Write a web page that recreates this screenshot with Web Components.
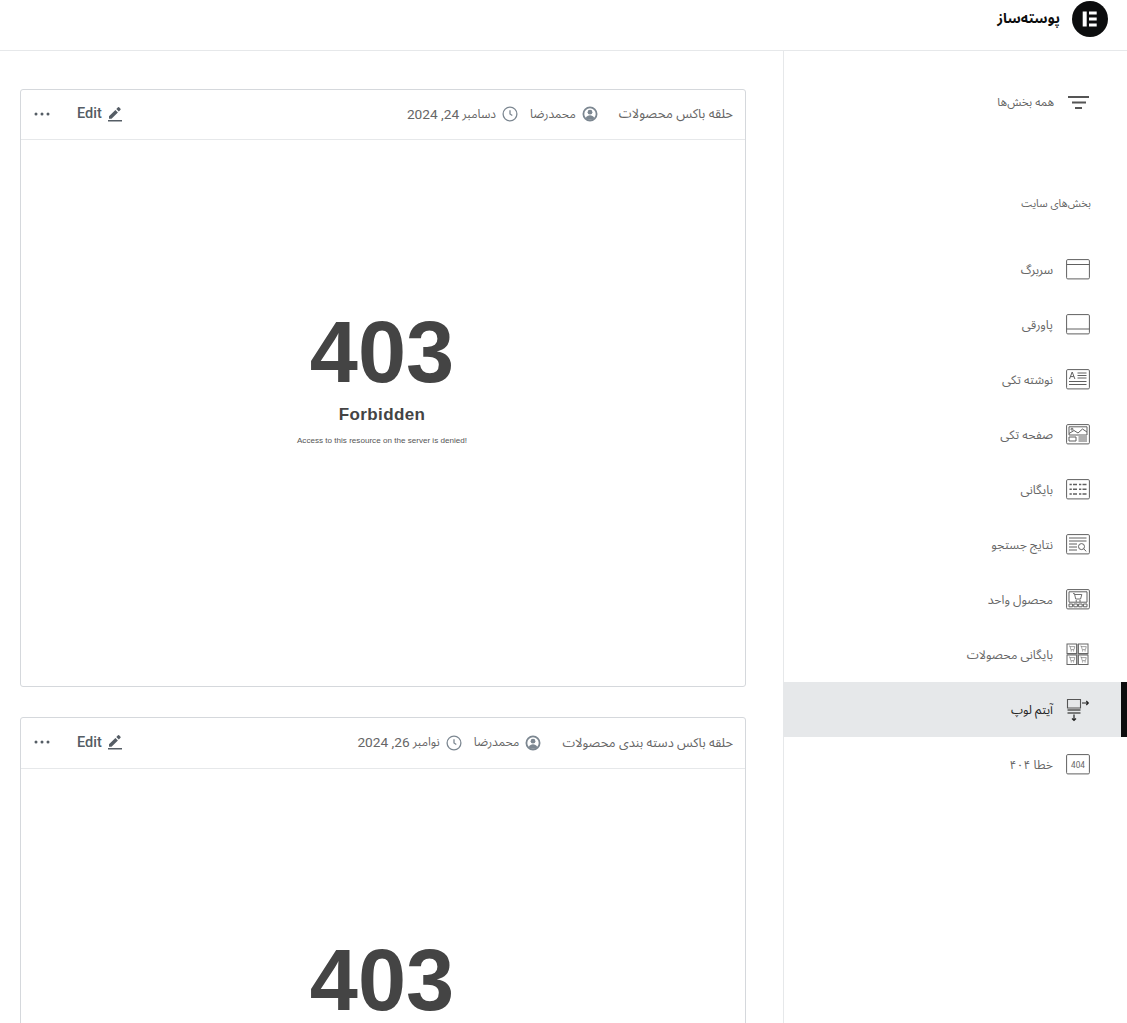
<!DOCTYPE html>
<html lang="fa">
<head>
<meta charset="utf-8">
<title>پوسته‌ساز</title>
<style>
html,body{margin:0;padding:0;height:100%;overflow:hidden;background:#fff}
body{font-family:Roboto,"DejaVu Sans",sans-serif;color:#555}
</style>
</head>
<body>
<app-shell>
  <site-topbar slot="top" title="پوسته‌ساز"></site-topbar>
  <div slot="main">
    <template-card title="حلقه باکس محصولات" author="محمدرضا" date="دسامبر" num="24, 2024"></template-card>
    <template-card tall title="حلقه باکس دسته بندی محصولات" author="محمدرضا" date="نوامبر" num="26, 2024"></template-card>
  </div>
  <side-nav slot="side">
    <nav-item kind="all" label="همه بخش‌ها"></nav-item>
    <nav-heading>بخش‌های سایت</nav-heading>
    <nav-item kind="header" label="سربرگ"></nav-item>
    <nav-item kind="footer" label="پاورقی"></nav-item>
    <nav-item kind="post" label="نوشته تکی"></nav-item>
    <nav-item kind="page" label="صفحه تکی"></nav-item>
    <nav-item kind="archive" label="بایگانی"></nav-item>
    <nav-item kind="search" label="نتایج جستجو"></nav-item>
    <nav-item kind="product" label="محصول واحد"></nav-item>
    <nav-item kind="products" label="بایگانی محصولات"></nav-item>
    <nav-item kind="loop" label="آیتم لوپ" active></nav-item>
    <nav-item kind="e404" label="خطا ۴۰۴"></nav-item>
  </side-nav>
</app-shell>
<script>
const FA='"Noto Sans Arabic","DejaVu Sans",Roboto,sans-serif';
function el(name,cls){customElements.define(name,cls)}
function box(extra){return `<rect x=".6" y=".6" width="22.8" height="19.3" rx="1.2"/>${extra||''}`}
function lines(arr){return arr.map(l=>`<path d="M${l[0]} ${l[1]}H${l[2]}"/>`).join('')}
function cart(x,y,s){return `<g transform="translate(${x} ${y}) scale(${s})"><path d="M0 0h1.600l1.400 6h5.400l1.400-5H2"/><circle cx="3.600" cy="8.200" r=".5"/><circle cx="7.800" cy="8.200" r=".5"/></g>`}
const cell=(y)=>`M3.500 ${y}h2.300M7 ${y}h4M13 ${y}h2.300M16.500 ${y}h4`;
const ICONS={
 header:box('<path d="M.6 5.500h22.800"/>'),
 footer:box('<path d="M.6 15h22.800"/>'),
 post:box(lines([[11.5,4,20.5],[11.5,6.5,20.5],[11.5,9,20.5],[3,12.5,20.5],[3,15.5,20.5]])+'<path d="M3.500 10 6.200 3l2.700 7M4.600 7.600h3.200"/>'),
 page:box('<path d="M3 2.800h18v8.200H3z"/><path d="M3 9.500l5-3 4 2.500 4.500-4L21 8"/><circle cx="6" cy="5.200" r="1"/><path d="M3 13h7v4H3zM12.500 13h8.500M12.500 15h8.500M12.500 17h8.500"/>'),
 archive:box(`<path stroke-width="1.400" d="${cell(5.5)}${cell(10.2)}${cell(15)}"/>`),
 search:box(lines([[3,4,20.5],[3,7,20.5],[3,10,11],[3,13,11],[3,16,11]])+'<circle cx="15.500" cy="12.600" r="3"/><path d="M17.700 14.800l2.600 2.600"/>'),
 product:box('<path d="M3 2.800h18v10.400H3z"/>'+cart(7,4.6,.9)+'<path d="M3 15h3.600v2.800H3zM7.800 15h3.600v2.800H7.800zM12.600 15h3.600v2.800h-3.600zM17.400 15H21v2.800h-3.600z"/>'),
 products:'<path d="M10.600 1h1.800v21h-1.800zM1 10.500h21v1.500H1z" fill="#b5b5b5" stroke="none"/><rect x="1" y="1" width="9.600" height="9.500"/><rect x="12.400" y="1" width="9.600" height="9.500"/><rect x="1" y="12" width="9.600" height="9.500"/><rect x="12.400" y="12" width="9.600" height="9.500"/>'+cart(3,3,.6)+cart(14.4,3,.6)+cart(3,14,.6)+cart(14.4,14,.6),
 loop:'<path d="M1.500 1.500h13v8.500h-13z" /><path d="M1.500 12h13M1.500 15h13" stroke-width="1.400"/><path d="M16 5h6M20.300 3l2 2-2 2M8 16.500V22.500M6 20.500l2 2 2-2" stroke="#222" stroke-width="1.200"/>',
 e404:box('<text x="12" y="13.600" text-anchor="middle" font-family="Roboto,sans-serif" font-size="8.200" fill="#666" stroke="none">404</text>')
};
const shellT=document.createElement('template');
shellT.innerHTML=`<style>
:host{display:grid;grid-template-columns:783px 1fr;grid-template-rows:51px 1fr;height:100vh;overflow:hidden}
.top{grid-column:1/-1;border-bottom:1px solid #e6e8ea}
.main{padding:38px 37px 0 20px;overflow:hidden;min-height:0}
.side{border-left:1px solid #e6e8ea;min-height:0;overflow:hidden}
</style><div class="top"><slot name="top"></slot></div><div class="main"><slot name="main"></slot></div><div class="side"><slot name="side"></slot></div>`;
el('app-shell',class extends HTMLElement{constructor(){super();this.attachShadow({mode:'open'}).append(shellT.content.cloneNode(true))}});

el('site-topbar',class extends HTMLElement{connectedCallback(){const r=this.shadowRoot||this.attachShadow({mode:'open'});
r.innerHTML=`<style>
:host{display:flex;direction:rtl;align-items:center;gap:12px;padding:1px 19px 0 0;height:36px;font-family:${FA}}
svg{width:36px;height:36px;flex:none}
span{font-size:14px;font-weight:700;color:#0c0d0e;position:relative;top:-1px}
</style><svg viewBox="0 0 36 36"><circle cx="18" cy="18" r="18" fill="#0c0d0e"/><path fill="#fff" d="M10.700 10.500h4v15h-4zM17 10.500h7.700v3H17zM17 16.500h7.700v3H17zM17 22.500h7.700v3H17z"/></svg><span>${this.getAttribute('title')}</span>`}});

el('forbidden-page',class extends HTMLElement{constructor(){super();this.attachShadow({mode:'open'}).innerHTML=`<style>
:host{display:flex;flex-direction:column;align-items:center;font-family:"Liberation Sans",Arial,sans-serif;color:#444;padding:166px 2px 0 0;height:432px;text-align:center}
h1{margin:0;font-size:86.500px;line-height:92px;font-weight:700}
h2{margin:6px 0 0;font-size:17px;line-height:22px;font-weight:700;letter-spacing:.4px}
p{margin:9px 0 0;font-size:8.100px;line-height:12px;color:#555}
</style><h1>403</h1><h2>Forbidden</h2><p>Access to this resource on the server is denied!</p>`}});

el('template-card',class extends HTMLElement{connectedCallback(){const r=this.shadowRoot||this.attachShadow({mode:'open'});const tall=this.hasAttribute('tall');
r.innerHTML=`<style>
:host{display:block;border:1px solid #d5d8dc;border-radius:3px;margin-bottom:30px;background:#fff;height:596px}
header{display:flex;direction:rtl;align-items:center;justify-content:space-between;height:${tall?51:50}px;box-sizing:border-box;border-bottom:1px solid #e6e8ea;padding:0 12px 2px 13px;font-size:13px;color:#666}
.meta,.act{display:flex;align-items:center}
.meta{margin-top:1px}
.t{font-family:${FA};font-size:${tall?12.8:13}px;margin-left:21px}
.a{display:flex;align-items:center;gap:6px;font-family:${FA};font-size:12px;margin-left:12px}
.d{display:flex;align-items:center;gap:6px;font-family:${FA};font-size:12px}
.d b{font-weight:400;font-family:Roboto,sans-serif;font-size:13.700px;position:relative;top:1px}
.act{gap:12px;color:#555d65;font:500 14.500px Roboto,sans-serif;direction:ltr;flex-direction:row}
.e{display:flex;align-items:center;gap:6px;margin-left:15px}
svg{display:block;flex:none}
</style><header>
<div class="meta"><span class="t">${this.getAttribute('title')}</span>
<span class="a"><svg width="16" height="16" viewBox="0 0 16 16"><circle cx="8" cy="8" r="6.600" fill="none" stroke="#7c8791" stroke-width="1.800"/><circle cx="8" cy="6.200" r="2.400" fill="#7c8791"/><path d="M3.600 12.200c1-2.200 2.700-3 4.400-3s3.400.8 4.400 3l-2 1.600H5.600z" fill="#7c8791"/></svg>${this.getAttribute('author')}</span>
<span class="d"><svg width="16" height="16" viewBox="0 0 16 16" fill="none" stroke="#7c8791"><circle cx="8" cy="8" r="6.900" stroke-width="1.300"/><path d="M8 4.200V8l2.300 1.500" stroke-width="1.300"/></svg><span>${this.getAttribute('date')} <b>${this.getAttribute('num')}</b></span></span></div>
<div class="act"><svg width="16" height="6" viewBox="0 0 16 6"><g fill="#555d65"><circle cx="2" cy="3" r="1.500"/><circle cx="8" cy="3" r="1.500"/><circle cx="14" cy="3" r="1.500"/></g></svg>
<span class="e">Edit<svg width="14" height="16" viewBox="0 0 14 16"><path fill="#555d65" d="M1 10.300V12.800H3.500L9.900 6.400 7.400 3.900zM10.800 5.500 12.500 3.800a.8.8 0 0 0 0-1.100L11.100 1.300a.8.8 0 0 0-1.100 0L8.300 3z"/><path fill="#555d65" d="M0 14h14v1.500H0z"/></svg></span></div>
</header><forbidden-page></forbidden-page>`;
if(tall)r.querySelector('forbidden-page').style.paddingTop='165px'}});

el('side-nav',class extends HTMLElement{constructor(){super();this.attachShadow({mode:'open'}).innerHTML=`<style>:host{display:block;padding-top:24px}</style><slot></slot>`}});
el('nav-heading',class extends HTMLElement{constructor(){super();this.attachShadow({mode:'open'}).innerHTML=`<style>:host{display:block;direction:rtl;padding:0 36px 0 0;margin:62px 0 12px;height:38px;line-height:24px;font-family:${FA};font-size:10.700px;color:#666}</style><slot></slot>`}});
el('nav-item',class extends HTMLElement{connectedCallback(){const r=this.shadowRoot||this.attachShadow({mode:'open'});const k=this.getAttribute('kind');const on=this.hasAttribute('active');
let svg;
if(k==='all')svg=`<svg width="23" height="21" viewBox="0 0 23 21" stroke="#555" stroke-width="2" fill="none"><path d="M1 5h21M5 10.500h14M8 16h7"/></svg>`;
else if(k==='loop')svg=`<svg width="24" height="24" viewBox="0 0 24 24" fill="none" stroke="#555" stroke-width="1.100">${ICONS[k]}</svg>`;
else if(k==='products')svg=`<svg width="24" height="23" viewBox="0 0 24 23" fill="none" stroke="#666" stroke-width="1">${ICONS[k]}</svg>`;
else svg=`<svg width="24" height="21" viewBox="0 0 24 21" fill="none" stroke="#606060" stroke-width="1">${ICONS[k]}</svg>`;
const all=k==='all';
r.innerHTML=`<style>
:host{display:flex;direction:rtl;align-items:center;gap:13px;height:55px;padding-right:37px;font-family:${FA};font-size:${all?11.500:12.200}px;color:${on?'#222':'#666'};background:${on?'#e6e8ea':'transparent'};position:relative}
i{position:absolute;right:0;top:0;bottom:0;width:6px;background:#0c0d0e}
span{position:relative;top:${all?-1:0}px}
</style>${on?'<i></i>':''}${svg}<span>${this.getAttribute('label')}</span>`}});
</script>
</body>
</html>
